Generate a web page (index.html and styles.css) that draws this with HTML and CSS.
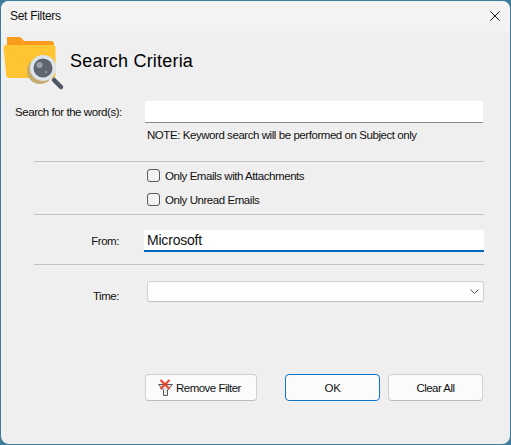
FILE: index.html
```html
<!DOCTYPE html>
<html lang="en">
<head>
<meta charset="utf-8">
<title>Set Filters</title>
<link rel="stylesheet" href="styles.css">
</head>
<body>
<div class="window">
  <div class="titlebar">
    <span class="title">Set Filters</span>
    <svg class="close" width="10" height="10" viewBox="0 0 10 10"><path d="M.3.3l9.400 9.400M9.700.3l-9.400 9.400" stroke="#1a1a1a" stroke-width="1" fill="none"/></svg>
  </div>
  <div class="content">
    <div class="header">
      <svg class="folder" width="64" height="60" viewBox="0 0 64 60">
        <path d="M5 4h12q2 0 3 1.500l2 2.500h27q3 0 3 3v6H5z" fill="#fb9d1c"/>
        <path d="M1.500 15q-.3-3 3-3h46q3 0 3 3v27q0 3-3 3H7q-2.500 0-2.800-3z" fill="#ffc432"/>
        <circle cx="38" cy="38" r="13" fill="#c5ab6c"/>
        <path d="M52 47l7 7" stroke="#4b5563" stroke-width="4.500" stroke-linecap="round"/>
        <circle cx="41" cy="35" r="13" fill="#dde3ea"/>
        <circle cx="41" cy="35" r="9.500" fill="#5f6570"/>
        <circle cx="37.500" cy="32" r="3" fill="#9a9faa"/>
        <circle cx="44" cy="39" r="1.500" fill="#80858f"/>
      </svg>
      <h1 class="heading">Search Criteria</h1>
    </div>

    <div class="row row-search">
      <label class="label label-left">Search for the word(s):</label>
      <div class="field field-search"></div>
    </div>
    <p class="note">NOTE: Keyword search will be performed on Subject only</p>

    <hr class="sep sep-first">

    <div class="check-list">
      <label class="check"><span class="box"></span>Only Emails with Attachments</label>
      <label class="check"><span class="box"></span>Only Unread Emails</label>
    </div>

    <hr class="sep sep-second">

    <div class="row row-from">
      <label class="label label-right">From:</label>
      <div class="field field-from">Microsoft</div>
    </div>

    <hr class="sep sep-third">

    <div class="row row-time">
      <label class="label label-right">Time:</label>
      <div class="select">
        <svg width="9" height="6" viewBox="0 0 9 6"><path d="M.5.500L4.500 4.500 8.500.500" stroke="#555" stroke-width="1" fill="none"/></svg>
      </div>
    </div>

    <div class="buttons">
      <button class="btn btn-remove" type="button">
        <svg width="15" height="17" viewBox="0 0 15 17">
          <path d="M.5 5.500h14L9.500 11v5.500h-4V11z" fill="#e6e6e6" stroke="#5a5a5a" stroke-width="1"/>
          <path d="M2.500 1l9 9M11.500 1l-9 9" stroke="#f0402a" stroke-width="2"/>
        </svg>
        Remove Filter
      </button>
      <button class="btn btn-ok" type="button">OK</button>
      <button class="btn btn-clear" type="button">Clear All</button>
    </div>
  </div>
</div>
</body>
</html>
```

FILE: styles.css
```css
* { box-sizing: border-box; }
html, body { margin: 0; height: 100%; }
body {
  background: #3f7b9a;
  padding: 1px;
  font-family: "Liberation Sans", Arial, sans-serif;
  font-size: 11.5px;
  letter-spacing: -.44px;
  color: #111;
}
.window {
  height: 443px;
  background: #efefef;
  border-radius: 8px;
  overflow: hidden;
  display: flex;
  flex-direction: column;
}
.titlebar {
  height: 30px;
  flex: none;
  background: #f3f3f3;
  display: flex;
  align-items: center;
  justify-content: space-between;
  padding: 0 10px 0 9px;
}
.title { font-size: 12px; letter-spacing: -.3px; }
.content { flex: 1; }
.header {
  display: flex;
  align-items: flex-start;
  height: 70px;
  padding: 2px 0 0 1px;
}
.folder { flex: none; }
.heading {
  margin: 17px 0 0 4px;
  font-size: 18px;
  font-weight: 400;
  line-height: 22px;
  letter-spacing: .2px;
  color: #000;
}
.row { display: flex; align-items: center; }
.label { flex: none; width: 144px; }
.label-left { padding-left: 14px; }
.label-right { text-align: right; }
.field { background: #fff; }
.field-search {
  width: 338px;
  height: 22px;
  border-bottom: 1px solid #8c8c8c;
}
.note {
  margin: 5px 0 0 146px;
  line-height: 14px;
}
.sep {
  margin: 0 0 0 33px;
  width: 450px;
  height: 1px;
  border: 0;
  background: #c2c2c2;
}
.sep-first { margin-top: 19px; }
.check-list {
  margin: 7px 0 0 146px;
  display: flex;
  flex-direction: column;
  gap: 11px;
}
.check { display: flex; align-items: center; gap: 5px; height: 13px; line-height: 12px; }
.box {
  width: 13px;
  height: 13px;
  background: #f3f3f3;
  border: 1px solid #5a5a5a;
  border-radius: 3px;
}
.sep-second { margin-top: 8px; }
.row-from { margin-top: 15px; }
.row-from .label { width: 143px; padding-right: 25px; }
.field-from {
  width: 340px;
  height: 22px;
  border-bottom: 2px solid #0067c0;
  padding: 0 3px;
  font-size: 14px;
  line-height: 20px;
  letter-spacing: -.2px;
}
.sep-third { margin-top: 12px; }
.row-time { margin-top: 16px; align-items: flex-start; }
.row-time .label { width: 146px; padding: 8px 28px 0 0; line-height: 14px; }
.select {
  width: 337px;
  height: 21px;
  background: #fdfdfd;
  border: 1px solid #d0d0d0;
  border-bottom-color: #bdbdbd;
  border-radius: 3px;
  display: flex;
  align-items: center;
  justify-content: flex-end;
  padding-right: 4px;
}
.buttons {
  margin: 71px 0 0 144px;
  display: flex;
}
.btn {
  height: 27px;
  font: inherit;
  letter-spacing: -.52px;
  color: #111;
  background: #fbfbfb;
  border: 1px solid #d0d0d0;
  border-bottom-color: #bcbcbc;
  border-radius: 4px;
  padding: 0;
}
.btn-remove {
  width: 112px;
  display: flex;
  align-items: center;
  gap: 3px;
  padding-left: 12px;
}
.btn-ok {
  width: 95px;
  margin-left: 28px;
  letter-spacing: -.2px;
  border: 1.500px solid #0b75c9;
}
.btn-clear { width: 95px; margin-left: 8px; }
```
